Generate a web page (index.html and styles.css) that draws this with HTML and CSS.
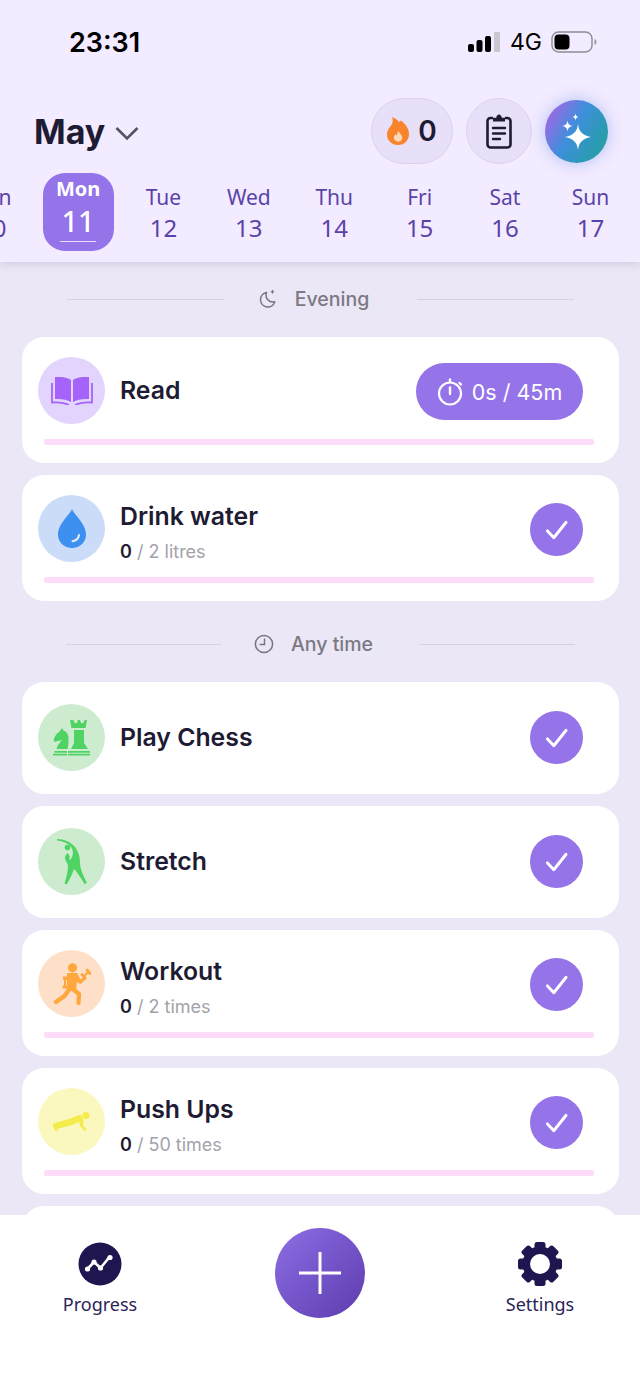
FILE: index.html
```html
<!DOCTYPE html>
<html lang="en">
<head>
  <meta charset="UTF-8">
  <meta name="viewport" content="width=device-width, initial-scale=1.0">
  <title>Habits</title>
  <link rel="stylesheet" href="styles.css">
</head>
<body>
<div class="app">

  <header class="top">
    <div class="status">
      <span class="clock">23:31</span>
      <div class="status-right">
        <svg class="signal" width="32" height="20" viewBox="0 0 32 20">
          <rect x="0" y="12" width="6" height="8" rx="2" fill="#000"/>
          <rect x="8.5" y="8" width="6" height="12" rx="2" fill="#000"/>
          <rect x="17" y="4" width="6" height="16" rx="2" fill="#000"/>
          <rect x="26" y="0" width="6" height="20" rx="1" fill="#c9c7cf"/>
        </svg>
        <span class="net">4G</span>
        <svg class="battery" width="46" height="22" viewBox="0 0 46 22">
          <rect x="1" y="1" width="40" height="20" rx="6.5" fill="none" stroke="#8e8c92" stroke-width="1.4"/>
          <rect x="3.5" y="3.5" width="15" height="15" rx="4" fill="#000"/>
          <path d="M43.5 8v6c1.2-.5 2-1.700 2-3s-.8-2.500-2-3z" fill="#9a989e"/>
        </svg>
      </div>
    </div>

    <div class="month-row">
      <div class="month">
        <h1>May</h1>
        <svg width="26" height="16" viewBox="0 0 26 16"><path d="M2.500 3l10.500 10.500L23.500 3" fill="none" stroke="#55535f" stroke-width="2.600"/></svg>
      </div>
      <div class="actions">
        <div class="streak">
          <svg width="22" height="28" viewBox="0 0 22 28">
            <path d="M5 0c4 1.500 6 3 7 5.500 .5-1 1-1.500 1.800-2 4.500 3.500 8.200 8 8.200 13.500 0 6.500-4.800 11-11 11S0 23.500 0 17.500c0-5 3.500-7.500 5-10.500C5.800 5 6 2.500 5 0z" fill="#f8842c"/>
            <path d="M11.500 14c.3 2 3.800 3.500 3.800 6.800 0 2.300-1.900 3.900-4.200 3.900s-4.200-1.600-4.200-3.900c0-1.800 1-2.800 1.900-3.700 .2 .8 .6 1.300 1.200 1.500 .1-1.700 .5-3.300 1.500-4.600z" fill="#fdd9bb"/>
          </svg>
          <span>0</span>
        </div>
        <div class="round-btn">
          <svg width="28" height="36" viewBox="0 0 28 36">
            <path d="M8 5H5.500A3 3 0 0 0 2.500 8v23.500a3 3 0 0 0 3 3h17a3 3 0 0 0 3-3V8a3 3 0 0 0-3-3H20" fill="none" stroke="#1e1b33" stroke-width="2.600"/>
            <path d="M8 8.500V4.800h3.200C11.500 2.800 12.500 1.500 14 1.500s2.500 1.300 2.800 3.300H20v3.700z" fill="#1e1b33"/>
            <path d="M8 15h12M8 20.500h12M8 26h7" stroke="#1e1b33" stroke-width="2.400" stroke-linecap="round"/>
          </svg>
        </div>
        <div class="magic-btn">
          <svg width="34" height="40" viewBox="0 0 34 40">
            <path d="M18 13c1 7.500 4 11 13 13-9 2-12 5.500-13 13-1-7.500-4-11-13-13 9-2 12-5.500 13-13z" fill="#fff"/>
            <path d="M7.500 9.500C8 13 9.500 14.500 13 15 9.500 15.500 8 17 7.500 20.500 7 17 5.500 15.500 2 15 5.500 14.500 7 13 7.500 9.500z" fill="#fff"/>
            <path d="M15.500 2.500c.3 2.300 1.200 3.200 3.500 3.500-2.300.3-3.200 1.200-3.500 3.500-.3-2.300-1.200-3.200-3.500-3.500 2.300-.3 3.200-1.200 3.500-3.500z" fill="#fff"/>
          </svg>
        </div>
      </div>
    </div>

    <div class="days">
      <div class="day"><span class="dow">Sun</span><span class="num">10</span></div>
      <div class="day active"><span class="dow">Mon</span><span class="num">11</span></div>
      <div class="day"><span class="dow">Tue</span><span class="num">12</span></div>
      <div class="day"><span class="dow">Wed</span><span class="num">13</span></div>
      <div class="day"><span class="dow">Thu</span><span class="num">14</span></div>
      <div class="day"><span class="dow">Fri</span><span class="num">15</span></div>
      <div class="day"><span class="dow">Sat</span><span class="num">16</span></div>
      <div class="day"><span class="dow">Sun</span><span class="num">17</span></div>
    </div>
  </header>

  <main class="list">
    <div class="section evening">
      <i class="rule"></i>
      <div class="section-name">
        <svg width="20" height="20" viewBox="0 0 20 20">
          <path d="M8.500 3.500a7.300 7.300 0 1 0 8.300 9.300 7 7 0 0 1-8.300-9.300z" fill="none" stroke="#77757f" stroke-width="1.500" stroke-linejoin="round"/>
          <path d="M14.500 0c.2 1.700 .9 2.500 2.500 2.800-1.600.3-2.300 1.100-2.500 2.800-.2-1.700-.9-2.500-2.500-2.800 1.600-.3 2.300-1.100 2.500-2.800z" fill="#77757f"/>
        </svg>
        <span>Evening</span>
      </div>
      <i class="rule"></i>
    </div>

    <section class="card">
      <div class="card-row">
        <div class="badge read">
          <svg width="42" height="28" viewBox="0 0 42 28">
            <path d="M4 0c6-.5 12 .5 16 3v22C16 22.500 10 21.500 4 22z" fill="#a563fa"/>
            <path d="M38 0c-6-.5-12 .5-16 3v22c4-2.500 10-3.500 16-3z" fill="#a563fa"/>
            <path d="M1 6v19.500c6-.5 12 0 17 2.500M41 6v19.500c-6-.5-12 0-17 2.500" fill="none" stroke="#a563fa" stroke-width="1.800"/>
          </svg>
        </div>
        <div class="info"><div class="name">Read</div></div>
        <div class="timer">
          <svg width="26" height="28" viewBox="0 0 26 28">
            <circle cx="13" cy="15.500" r="11" fill="none" stroke="#fff" stroke-width="2.200"/>
            <path d="M13 9.500v6.500" stroke="#fff" stroke-width="2.400" stroke-linecap="round"/>
            <path d="M13 1.500v2.500M22.500 5l1.500 1.500" stroke="#fff" stroke-width="2.400" stroke-linecap="round"/>
          </svg>
          <span>0s / 45m</span>
        </div>
      </div>
      <div class="bar"></div>
    </section>

    <section class="card">
      <div class="card-row">
        <div class="badge water">
          <svg width="28" height="40" viewBox="0 0 28 40">
            <path d="M14 0c1.500 5 14 14.500 14 25.500C28 33.500 21.700 39 14 39S0 33.500 0 25.500C0 14.500 12.500 5 14 0z" fill="#3d8ff0"/>
            <path d="M21 26c-.5 3.500-2.700 5.700-6.500 6.200" fill="none" stroke="#e3effc" stroke-width="2" stroke-linecap="round"/>
          </svg>
        </div>
        <div class="info two">
          <div class="name">Drink water</div>
          <div class="sub"><b>0</b> / 2 litres</div>
        </div>
        <div class="check"><svg width="24" height="20" viewBox="0 0 26 22"><path d="M2.500 12l7 7.500L23 2.500" fill="none" stroke="#fff" stroke-width="3.200" stroke-linecap="round" stroke-linejoin="round"/></svg></div>
      </div>
      <div class="bar"></div>
    </section>

    <div class="section anytime">
      <i class="rule"></i>
      <div class="section-name">
        <svg width="20" height="20" viewBox="0 0 20 20">
          <circle cx="10" cy="10" r="8.600" fill="none" stroke="#77757f" stroke-width="1.500"/>
          <path d="M10.500 4.500v6H5.500" fill="none" stroke="#77757f" stroke-width="1.500"/>
        </svg>
        <span>Any time</span>
      </div>
      <i class="rule"></i>
    </div>

    <section class="card plain">
      <div class="card-row">
        <div class="badge green">
          <svg width="38" height="36" viewBox="0 0 38 36">
            <path d="M9 8l1.500 2.500c3 1 5 3.500 5 8 0 3.500 0 7-1 10.500H3.500c.5-3.500 3.500-6 5.500-9.500-1.500 1-3 1.500-4.500 1.500L2 22 .5 20c1-4 3.500-6.500 6-8.500z" fill="#4fd463"/>
            <path d="M1.500 31H14v1.800H1.500zM0 33.800h14v1.800H0z" fill="#4fd463"/>
            <path d="M17 0h3.500l1 3H24l1-3h2l1 3h2.500l1-3H34l-1.500 8h-14zM21 10h10v13l4 6H18l3-6zM15 31h22v1.800H15zM15 33.800h22v1.800H15z" fill="#4fd463"/>
          </svg>
        </div>
        <div class="info"><div class="name">Play Chess</div></div>
        <div class="check"><svg width="24" height="20" viewBox="0 0 26 22"><path d="M2.500 12l7 7.500L23 2.500" fill="none" stroke="#fff" stroke-width="3.200" stroke-linecap="round" stroke-linejoin="round"/></svg></div>
      </div>
    </section>

    <section class="card plain">
      <div class="card-row">
        <div class="badge green">
          <svg width="30" height="46" viewBox="0 0 30 46">
            <path d="M0 0C7 0 14 3 18 8c4 5 5 11 5 16 0 6 4 14 7 20l-2.500 1c-3.500-6-7.500-12-10.500-15-2 6-4.500 11-7.500 15.500l-2-1c2-6.500 3.500-12.500 3.500-17.500 0-3-3-5-3-8.500 0-2 1.500-3.500 3-4.500l2 4c-1 1-1 2 0 3 3-3 4-8 1.500-12.500C11.500 4.500 6 2 0 1.500z" fill="#4fd463"/>
            <circle cx="10.500" cy="8.500" r="2.800" fill="#4fd463"/>
          </svg>
        </div>
        <div class="info"><div class="name">Stretch</div></div>
        <div class="check"><svg width="24" height="20" viewBox="0 0 26 22"><path d="M2.500 12l7 7.500L23 2.500" fill="none" stroke="#fff" stroke-width="3.200" stroke-linecap="round" stroke-linejoin="round"/></svg></div>
      </div>
    </section>

    <section class="card">
      <div class="card-row">
        <div class="badge orange">
          <svg width="38" height="42" viewBox="0 0 38 42">
            <circle cx="19.500" cy="4.800" r="4.600" fill="#ffa63c"/>
            <path d="M14 10h10l3.500 6.500 4.500-3.500 1.800 2.500-6.500 5.500-3.500-2-.8 9H14z" fill="#ffa63c"/>
            <path d="M16.500 26l-5 7L3 39M21 27l5 4-.5 9" fill="none" stroke="#ffa63c" stroke-width="4.200" stroke-linejoin="round" stroke-linecap="round"/>
            <path d="M10 13.500h4v3.500h-1v5.500h1.500v3h-5v-3H11V17h-1z" fill="#ffa63c"/>
            <path d="M30.500 13.500l5-4.500" fill="none" stroke="#ffa63c" stroke-width="2"/>
            <path d="M29 11.500l3 3.500M34 7l3 3.500" fill="none" stroke="#ffa63c" stroke-width="2.800" stroke-linecap="round"/>
          </svg>
        </div>
        <div class="info two">
          <div class="name">Workout</div>
          <div class="sub"><b>0</b> / 2 times</div>
        </div>
        <div class="check"><svg width="24" height="20" viewBox="0 0 26 22"><path d="M2.500 12l7 7.500L23 2.500" fill="none" stroke="#fff" stroke-width="3.200" stroke-linecap="round" stroke-linejoin="round"/></svg></div>
      </div>
      <div class="bar"></div>
    </section>

    <section class="card">
      <div class="card-row">
        <div class="badge yellow">
          <svg width="38" height="20" viewBox="0 0 38 20">
            <circle cx="33" cy="3.500" r="3.500" fill="#f4ec4a"/>
            <path d="M0 11.500 16 7l10-4 3 .5 1.500 5-.5 4.500 4 5.500h-3l-4-4.500-.5-4-9 3.500L4 17l1 2H2.500L0 14.500z" fill="#f4ec4a"/>
          </svg>
        </div>
        <div class="info two">
          <div class="name">Push Ups</div>
          <div class="sub"><b>0</b> / 50 times</div>
        </div>
        <div class="check"><svg width="24" height="20" viewBox="0 0 26 22"><path d="M2.500 12l7 7.500L23 2.500" fill="none" stroke="#fff" stroke-width="3.200" stroke-linecap="round" stroke-linejoin="round"/></svg></div>
      </div>
      <div class="bar"></div>
    </section>

    <section class="card"></section>
  </main>

  <nav class="tabs">
    <div class="tab">
      <svg width="44" height="44" viewBox="0 0 44 44">
        <circle cx="22" cy="22" r="21.500" fill="#1f1650"/>
        <path d="M9.500 27l6.500-7 6.500 6 9-11" fill="none" stroke="#fff" stroke-width="2.600" stroke-linejoin="round"/>
        <circle cx="9.500" cy="27" r="2.600" fill="#fff"/><circle cx="16" cy="20" r="2.600" fill="#fff"/>
        <circle cx="22.500" cy="26" r="2.600" fill="#fff"/><circle cx="32" cy="15.500" r="2.600" fill="#fff"/>
      </svg>
      <span>Progress</span>
    </div>
    <div class="add">
      <svg width="42" height="42" viewBox="0 0 42 42"><path d="M21 0v42M0 21h42" stroke="#fff" stroke-width="3"/></svg>
    </div>
    <div class="tab">
      <svg width="44" height="44" viewBox="0 0 44 44">
        <g fill="#1f1650">
          <circle cx="22" cy="22" r="17.500"/>
          <rect x="16.500" y="0" width="11" height="44" rx="2.500"/>
          <rect x="16.500" y="0" width="11" height="44" rx="2.500" transform="rotate(45 22 22)"/>
          <rect x="16.500" y="0" width="11" height="44" rx="2.500" transform="rotate(90 22 22)"/>
          <rect x="16.500" y="0" width="11" height="44" rx="2.500" transform="rotate(135 22 22)"/>
        </g>
        <circle cx="22" cy="22" r="10" fill="#fff"/>
      </svg>
      <span>Settings</span>
    </div>
  </nav>

</div>
</body>
</html>
```

FILE: styles.css
```css
* { box-sizing: border-box; }

html, body { margin: 0; padding: 0; }

body {
  font-family: "Inter", "Liberation Sans", sans-serif;
  color: #1e1b33;
}

.app {
  width: 640px;
  height: 1386px;
  display: flex;
  flex-direction: column;
  overflow: hidden;
  background: #ebe7f6;
}

/* header */
.top {
  flex: none;
  height: 262px;
  background: #f3ebff;
  box-shadow: 0 2px 8px rgba(70, 50, 120, 0.16);
  position: relative;
  z-index: 1;
  overflow: hidden;
}

.status {
  height: 98px;
  padding: 24px 43px 0 69px;
  display: flex;
  justify-content: space-between;
  align-items: flex-start;
}

.clock {
  font-size: 27px;
  font-weight: 600;
  line-height: 38px;
  color: #000;
}

.status-right {
  display: flex;
  align-items: center;
  height: 36px;
}

.net {
  font-size: 23px;
  margin: 0 9px 0 10px;
  color: #000;
}

.month-row {
  height: 66px;
  padding: 0 32px 0 34px;
  display: flex;
  justify-content: space-between;
  align-items: center;
}

.month {
  display: flex;
  align-items: center;
  gap: 9px;
}

.month h1 {
  margin: 0;
  padding-top: 2px;
  font-size: 34px;
  font-weight: 700;
  line-height: 66px;
}

.month svg {
  margin-top: 4px;
}

.actions {
  display: flex;
  align-items: center;
  gap: 13px;
}

.streak {
  width: 82px;
  height: 66px;
  border-radius: 33px;
  background: #e8dff8;
  border: 1px solid #dcd2ef;
  display: flex;
  align-items: center;
  justify-content: center;
  gap: 9px;
  font-size: 28px;
  font-weight: 600;
}

.round-btn {
  width: 66px;
  height: 66px;
  border-radius: 50%;
  background: #e8dff8;
  border: 1px solid #dcd2ef;
  display: flex;
  align-items: center;
  justify-content: center;
}

.magic-btn {
  width: 63px;
  height: 63px;
  border-radius: 50%;
  background: linear-gradient(120deg, #b65fe6 2%, #3f8fdc 45%, #2b9ab4 75%, #28a096 100%);
  box-shadow: 0 0 16px rgba(70, 130, 230, 0.4);
  display: flex;
  align-items: center;
  justify-content: center;
}

.days {
  display: flex;
  margin-top: 9px;
  margin-left: -50px;
  width: 700px;
}

.day {
  flex: none;
  width: 85.4px;
  height: 78px;
  display: flex;
  flex-direction: column;
  align-items: center;
  justify-content: center;
  font-family: "Noto Sans", sans-serif;
  color: #5a43a8;
  padding-top: 3px;
}

.dow {
  font-size: 21px;
  line-height: 28px;
}

.num {
  font-size: 24px;
  line-height: 34px;
}

.day.active {
  width: 71px;
  margin: 0 7.2px;
  border-radius: 22px;
  background: #9573e8;
  color: #fff;
  padding-top: 0;
  justify-content: flex-start;
}

.day.active .dow {
  font-size: 20px;
  font-weight: 700;
  line-height: 32px;
}

.day.active .num {
  font-size: 29px;
  line-height: 32px;
  font-weight: 500;
  padding-bottom: 4px;
  border-bottom: 1px solid #e6dcfb;
  width: 36px;
  box-sizing: content-box;
  text-align: center;
}

/* list */
.list {
  flex: 1;
  min-height: 0;
  overflow: hidden;
  padding: 0 21px 0 22px;
  display: flex;
  flex-direction: column;
  gap: 12px;
}

.section {
  flex: none;
  display: flex;
  align-items: center;
  justify-content: space-between;
  color: #7b7983;
  font-size: 19.5px;
  font-weight: 500;
}

.section.evening {
  height: 75px;
  margin-bottom: -12px;
  padding: 0 45px 1px;
}

.section.anytime {
  height: 81px;
  margin: -12px 0;
  padding: 5px 44px 0;
}

.rule {
  display: block;
  width: 157px;
  height: 1px;
  background: #d6d3e0;
}

.anytime .rule {
  width: 155px;
}

.section-name {
  display: flex;
  align-items: center;
  gap: 17px;
  margin-right: 14px;
}

.card {
  flex: none;
  height: 126px;
  background: #fff;
  border-radius: 22px;
  padding: 20px 36px 0 16px;
}

.card.plain {
  height: 112px;
  padding-top: 22px;
}

.card-row {
  display: flex;
  align-items: center;
  height: 67px;
}

.badge {
  flex: none;
  width: 67px;
  height: 67px;
  border-radius: 50%;
  display: flex;
  align-items: center;
  justify-content: center;
  margin-right: 15px;
}

.read { background: #e2d4fd; }
.water { background: #cbdcf8; }
.green { background: #cdeccf; }
.orange { background: #fee0c8; }
.yellow { background: #fbf8bf; }

.info {
  flex: 1;
  padding-bottom: 2px;
}

.info.two {
  padding-top: 9px;
}

.name {
  font-size: 24.8px;
  font-weight: 600;
  line-height: 32px;
}

.sub {
  font-size: 18px;
  line-height: 24px;
  margin-top: 8px;
  color: #a3a2aa;
}

.sub b {
  color: #1e1b33;
  font-weight: 600;
}

.bar {
  height: 6px;
  margin: 15px -11px 0 6px;
  border-radius: 2px;
  background: #fcdcf9;
}

.check {
  flex: none;
  width: 53px;
  height: 53px;
  margin-top: 2px;
  border-radius: 50%;
  background: #9573e8;
  display: flex;
  align-items: center;
  justify-content: center;
}

.plain .check {
  margin-top: 0;
}

.timer {
  flex: none;
  width: 167px;
  height: 57px;
  border-radius: 29px;
  background: #9573e8;
  color: #fff;
  font-size: 21.5px;
  display: flex;
  align-items: center;
  justify-content: center;
  gap: 9px;
  margin-top: 2px;
}

/* bottom bar */
.tabs {
  flex: none;
  height: 171px;
  background: #fff;
  padding: 13px 63px 0;
  display: flex;
  justify-content: space-between;
  align-items: flex-start;
  position: relative;
  z-index: 1;
}

.tab {
  width: 74px;
  padding-top: 14px;
  display: flex;
  flex-direction: column;
  align-items: center;
  font-family: "Noto Sans", sans-serif;
  font-size: 18px;
  line-height: 26px;
  color: #2b2458;
  gap: 5px;
}

.add {
  width: 90px;
  height: 90px;
  border-radius: 50%;
  background: linear-gradient(135deg, #8d6ee4, #5c3cae);
  display: flex;
  align-items: center;
  justify-content: center;
}
```
